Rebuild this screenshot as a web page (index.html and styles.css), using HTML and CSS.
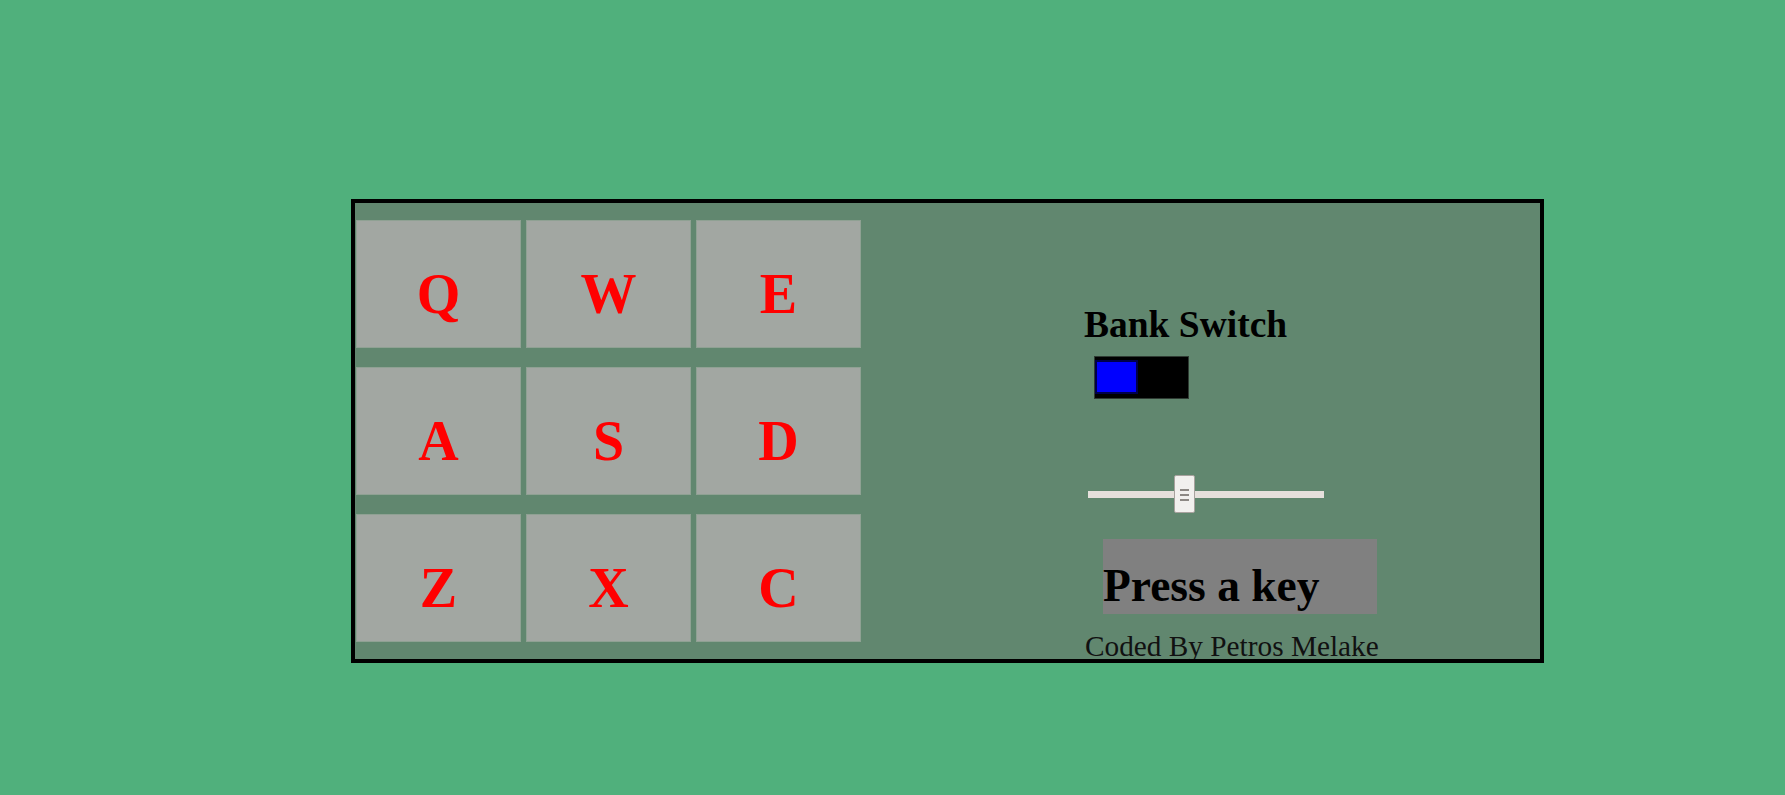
FILE: index.html
```html
<!DOCTYPE html>
<html lang="en">
<head>
<meta charset="utf-8">
<title>Drum Machine</title>
<link rel="stylesheet" href="styles.css">
</head>
<body>
<div class="machine" id="drum-machine">
  <div class="pads">
    <div class="pad">Q</div>
    <div class="pad">W</div>
    <div class="pad">E</div>
    <div class="pad">A</div>
    <div class="pad">S</div>
    <div class="pad">D</div>
    <div class="pad">Z</div>
    <div class="pad">X</div>
    <div class="pad">C</div>
  </div>
  <div class="controls">
    <h3 class="bank-title">Bank Switch</h3>
    <div class="toggle"><div class="toggle-knob"></div></div>
    <div class="slider-wrap">
      <input class="volume" type="range" min="0" max="1" step="0.01" value="0.4">
    </div>
    <div class="display"><p class="display-text">Press a key</p></div>
    <p class="credit">Coded By Petros Melake</p>
  </div>
</div>
</body>
</html>
```
FILE: styles.css
```css
html, body {
  margin: 0;
  padding: 0;
}
body {
  background: #50b07c;
  height: 795px;
  font-family: "Liberation Serif", "Times New Roman", serif;
  overflow: hidden;
}
.machine {
  box-sizing: border-box;
  margin: 199px 0 0 351px;
  width: 1193px;
  height: 464px;
  border: 4px solid #000;
  background: #61876f;
  display: flex;
  align-items: flex-start;
  overflow: hidden;
  padding: 0 0 0 1px;
}
.pads {
  margin-top: 17px;
  display: grid;
  grid-template-columns: 165px 165px 165px;
  grid-template-rows: 128px 128px 128px;
  column-gap: 5px;
  row-gap: 19px;
}
.pad {
  box-sizing: border-box;
  background: #a2a7a2;
  border: 1px solid #8fa193;
  color: #ff0000;
  font-weight: bold;
  font-size: 56px;
  line-height: 62px;
  display: flex;
  align-items: center;
  justify-content: center;
  padding-top: 20px;
}
.controls {
  margin-left: 223px;
  padding-top: 103px;
  display: flex;
  flex-direction: column;
  align-items: flex-start;
}
.bank-title {
  margin: 0;
  font-size: 37.5px;
  line-height: 37.5px;
  font-weight: bold;
  color: #000;
}
.toggle {
  box-sizing: border-box;
  margin: 12.5px 0 0 10px;
  width: 95px;
  height: 43px;
  background: #000;
  border: 1px solid #2f3b33;
  padding-top: 3px;
}
.toggle-knob {
  box-sizing: border-box;
  width: 43px;
  height: 34px;
  background: #0000ff;
  border: 2px solid #00004a;
}
.slider-wrap {
  margin-top: 76px;
  height: 38px;
}
.volume {
  -webkit-appearance: none;
  appearance: none;
  display: block;
  margin: 15.5px 0 0 4px;
  width: 236px;
  height: 7px;
  background: #e6e0dc;
  padding: 0;
  border: none;
}
.volume::-webkit-slider-runnable-track {
  height: 7px;
  background: #e6e0dc;
  border: none;
}
.volume::-webkit-slider-thumb {
  -webkit-appearance: none;
  appearance: none;
  box-sizing: border-box;
  width: 21px;
  height: 38px;
  margin-top: -15.5px;
  border: 1px solid #a8a29e;
  border-radius: 2px;
  background:
    linear-gradient(#8d8884, #8d8884) center 13px / 9px 2px no-repeat,
    linear-gradient(#8d8884, #8d8884) center 18px / 9px 2px no-repeat,
    linear-gradient(#8d8884, #8d8884) center 23px / 9px 2px no-repeat,
    #f2f0ee;
}
.display {
  box-sizing: border-box;
  margin: 26px 0 0 19px;
  width: 274px;
  height: 75px;
  background: #808080;
  padding-top: 24px;
}
.display-text {
  margin: 0;
  font-size: 45.5px;
  line-height: 45px;
  font-weight: bold;
  color: #000;
  white-space: nowrap;
}
.credit {
  margin: 17.7px 0 0 1px;
  font-size: 29.3px;
  line-height: 29px;
  color: #111;
  white-space: nowrap;
}
```
